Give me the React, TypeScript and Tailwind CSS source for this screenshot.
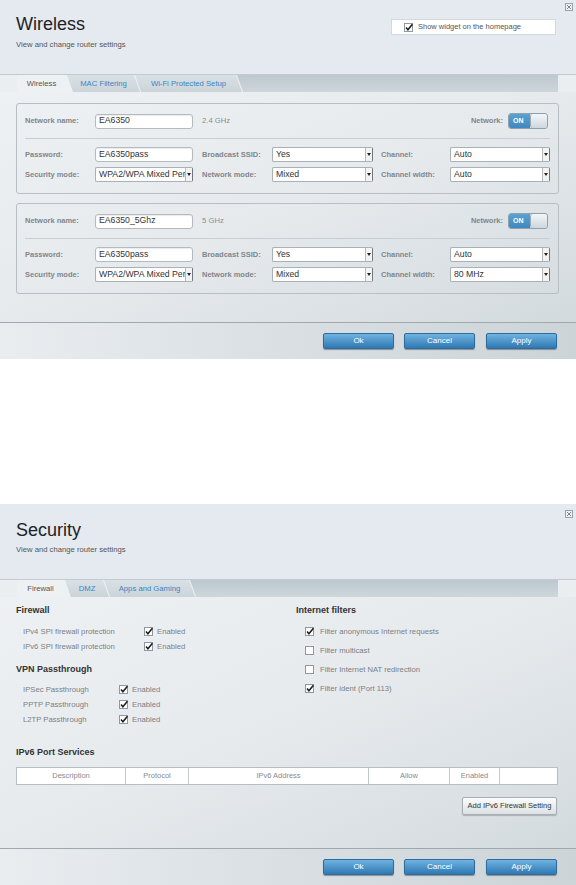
import type { ReactNode } from 'react'

type Tab = { label: string; cls: string; active?: boolean }

const CloseIcon = ({ cls }: { cls: string }) => (
  <svg width="8" height="8" viewBox="0 0 8 8" className={`absolute right-[3px] ${cls}`}>
    <rect x="0.5" y="0.5" width="7" height="7" fill="#eef1f4" stroke="#9aa2a8" />
    <path d="M2 2L6 6M6 2L2 6" stroke="#7d868c" strokeWidth="1" />
  </svg>
)

const Check = ({ checked }: { checked?: boolean }) => (
  <svg width="10" height="9" viewBox="0 0 10 9" className="shrink-0">
    <rect x="0.5" y="0.5" width="8" height="8" fill="#fff" stroke="#8f989e" />
    {checked && (
      <path d="M2 4.6L3.9 6.8L8.4 1.2" fill="none" stroke="#1d1d1d" strokeWidth="1.5" />
    )}
  </svg>
)

const TextInput = ({ value }: { value: string }) => (
  <div className="flex h-[15px] w-[98px] shrink-0 items-center rounded-[3px] border border-[#b3bbc0] bg-white pl-[3px] text-[8.7px] text-[#333] shadow-[inset_0_1px_1px_rgba(0,0,0,0.08)]">
    {value}
  </div>
)

const Select = ({ value, cls }: { value: string; cls: string }) => (
  <div
    className={`${cls} flex h-[15px] shrink-0 items-stretch overflow-hidden rounded-[2px] border border-[#a9b1b6] border-r-[#6f777c] bg-white`}
  >
    <div className="flex-1 overflow-hidden whitespace-nowrap pl-[3px] text-[8.7px] leading-[13px] text-[#333]">
      {value}
    </div>
    <div className="flex w-[7px] shrink-0 items-center justify-center border-l border-[#b9b9b9] bg-[#f3f3f3]">
      <svg width="4" height="3" viewBox="0 0 4 3">
        <polygon points="0,0 4,0 2,3" fill="#222" />
      </svg>
    </div>
  </div>
)

const Label = ({ children, cls }: { children: ReactNode; cls: string }) => (
  <div className={`${cls} shrink-0 text-[7.5px] font-bold text-[#80868b]`}>{children}</div>
)

const Toggle = () => (
  <div className="ml-[5px] mr-[2px] flex h-[16px] w-[40px] overflow-hidden rounded-[3px] border border-[#8ea2ae]">
    <div className="flex w-[21px] items-center bg-linear-to-b from-[#5ba2d3] to-[#3f88bf] pl-[4px] text-[7px] font-bold text-white">
      ON
    </div>
    <div className="flex-1 rounded-[3px] border-l border-[#9aabb5] bg-linear-to-b from-[#f4f7f9] to-[#cdd7dd]" />
  </div>
)

const BlueButton = ({ label }: { label: string }) => (
  <div className="flex h-[16px] w-[71px] items-center justify-center rounded-[2px] border border-[#2d6d9d] bg-linear-to-b from-[#6fb3e0] to-[#2e78b3] text-[8px] text-white shadow-[0_1px_1px_rgba(0,0,0,0.35)]">
    {label}
  </div>
)

const Tabs = ({ tabs }: { tabs: Tab[] }) => (
  <div className="ml-[17px] mr-[18px] flex h-[17px] bg-[#eef2f4]">
    {tabs.map((t, i) => (
      <div
        key={t.label}
        className={`${t.cls} flex shrink-0 items-center justify-center text-[7.7px] ${
          i === 0
            ? 'pr-[6px] [clip-path:polygon(0_0,calc(100%_-_6px)_0,100%_100%,0_100%)]'
            : '-ml-[5px] [clip-path:polygon(0_0,calc(100%_-_6px)_0,100%_100%,6px_100%)]'
        } ${
          t.active
            ? 'bg-[#eef1f3] text-[#555]'
            : 'bg-linear-to-b from-[#d9e1e5] to-[#cbd4d9] text-[#3a86c2]'
        }`}
      >
        {t.label}
      </div>
    ))}
    <div className="-ml-[5px] flex-1 bg-linear-to-b from-[#bdc9cf] to-[#cdd6db] [clip-path:polygon(0_0,100%_0,100%_100%,6px_100%)]" />
  </div>
)

const Footer = () => (
  <div className="flex h-[37px] justify-end border-t border-[#9ea8ad] bg-linear-to-r from-[#e9edf0] via-[#d9dfe3] to-[#cdd4d8] pr-[19px] pt-[10px]">
    <BlueButton label="Ok" />
    <div className="ml-[10px]">
      <BlueButton label="Cancel" />
    </div>
    <div className="ml-[11px]">
      <BlueButton label="Apply" />
    </div>
  </div>
)

const WirelessSection = ({ name, band, width }: { name: string; band: string; width: string }) => (
  <div className="ml-[16px] w-[543px] rounded-[3px] border border-[#b7bfc4] px-[8px] pb-[11px] pt-[8px]">
    <div className="flex h-[18px] items-center">
      <Label cls="w-[70px]">Network name:</Label>
      <TextInput value={name} />
      <div className="ml-[9px] text-[7.7px] text-[#8a8f94]">{band}</div>
      <div className="ml-auto text-[7.5px] font-bold text-[#80868b]">Network:</div>
      <Toggle />
    </div>
    <div className="mt-[8px] border-t border-[#c8cfd3]" />
    <div className="mt-[8px] flex h-[15px] items-center">
      <Label cls="w-[70px]">Password:</Label>
      <TextInput value="EA6350pass" />
      <Label cls="ml-[9px] w-[70px]">Broadcast SSID:</Label>
      <Select value="Yes" cls="w-[101px]" />
      <Label cls="ml-[8px] w-[69px]">Channel:</Label>
      <Select value="Auto" cls="w-[100px]" />
    </div>
    <div className="mt-[5px] flex h-[15px] items-center">
      <Label cls="w-[70px]">Security mode:</Label>
      <Select value="WPA2/WPA Mixed Personal" cls="w-[98px]" />
      <Label cls="ml-[9px] w-[70px]">Network mode:</Label>
      <Select value="Mixed" cls="w-[101px]" />
      <Label cls="ml-[8px] w-[69px]">Channel width:</Label>
      <Select value={width} cls="w-[100px]" />
    </div>
  </div>
)

const Heading = ({ children }: { children: ReactNode }) => (
  <div className="text-[9px] font-bold leading-[12px] text-[#333]">{children}</div>
)

const EnabledRow = ({ label, cls }: { label: string; cls: string }) => (
  <div className="flex h-[15px] items-center pl-[7px] text-[7.7px] text-[#7b8085]">
    <div className={`${cls} shrink-0`}>{label}</div>
    <Check checked />
    <div className="ml-[3px]">Enabled</div>
  </div>
)

const FilterRow = ({ label, checked }: { label: string; checked?: boolean }) => (
  <div className="flex h-[19px] items-center pl-[9px] text-[7.7px] text-[#7b8085]">
    <Check checked={checked} />
    <div className="ml-[5px]">{label}</div>
  </div>
)

const Cell = ({ children, cls }: { children?: ReactNode; cls: string }) => (
  <div className={`${cls} flex items-center justify-center text-[7.5px] text-[#868b90]`}>{children}</div>
)

export default function App() {
  return (
    <div className="w-[576px] bg-white font-['Liberation_Sans',Arial,sans-serif]">
      {/* Wireless panel */}
      <div className="relative">
        <CloseIcon cls="top-[3px]" />
        <div className="flex h-[75px] justify-between border-b border-[#c3cbd0] bg-[#e4eaf0] px-[16px]">
          <div className="pt-[13px]">
            <div className="text-[18px] leading-[22px] text-[#1e2226]">Wireless</div>
            <div className="mt-[5px] text-[7.7px] leading-[10px] text-[#555]">View and change router settings</div>
          </div>
          <div className="mr-[4px] mt-[19px] flex h-[16px] w-[165px] items-center border border-[#d3d9de] bg-white pl-[12px] text-[7.5px] text-[#555]">
            <Check checked />
            <span className="ml-[4px]">Show widget on the homepage</span>
          </div>
        </div>
        <div className="bg-[#eaeef1]">
          <Tabs
            tabs={[
              { label: 'Wireless', cls: 'w-[55px]', active: true },
              { label: 'MAC Filtering', cls: 'w-[73px]' },
              { label: 'Wi-Fi Protected Setup', cls: 'w-[107px]' },
            ]}
          />
        </div>
        <div className="h-[230px] bg-linear-to-br from-[#eef1f3] via-[#e6eaed] to-[#d3dade] pt-[11px]">
          <WirelessSection name="EA6350" band="2.4 GHz" width="Auto" />
          <div className="mt-[9px]">
            <WirelessSection name="EA6350_5Ghz" band="5 GHz" width="80 MHz" />
          </div>
        </div>
        <Footer />
      </div>

      {/* Security panel */}
      <div className="relative mt-[145px]">
        <CloseIcon cls="top-[6px]" />
        <div className="h-[76px] border-b border-[#c3cbd0] bg-[#e4eaf0] px-[16px] pt-[15px]">
          <div className="text-[18px] leading-[22px] text-[#1e2226]">Security</div>
          <div className="mt-[4px] text-[7.7px] leading-[10px] text-[#555]">View and change router settings</div>
        </div>
        <div className="bg-[#eaeef1]">
          <Tabs
            tabs={[
              { label: 'Firewall', cls: 'w-[53px]', active: true },
              { label: 'DMZ', cls: 'w-[44px]' },
              { label: 'Apps and Gaming', cls: 'w-[91px]' },
            ]}
          />
        </div>
        <div className="flex h-[251px] flex-col bg-linear-to-br from-[#eef1f3] via-[#e6eaed] to-[#d3dade] pt-[7px]">
          <div className="flex">
            <div className="w-[296px] shrink-0 pl-[16px]">
              <Heading>Firewall</Heading>
              <div className="mt-[8px]">
                <EnabledRow label="IPv4 SPI firewall protection" cls="w-[121px]" />
                <EnabledRow label="IPv6 SPI firewall protection" cls="w-[121px]" />
              </div>
              <div className="mt-[9px]">
                <Heading>VPN Passthrough</Heading>
              </div>
              <div className="mt-[7px]">
                <EnabledRow label="IPSec Passthrough" cls="w-[96px]" />
                <EnabledRow label="PPTP Passthrough" cls="w-[96px]" />
                <EnabledRow label="L2TP Passthrough" cls="w-[96px]" />
              </div>
            </div>
            <div>
              <Heading>Internet filters</Heading>
              <div className="mt-[6px]">
                <FilterRow label="Filter anonymous Internet requests" checked />
                <FilterRow label="Filter multicast" />
                <FilterRow label="Filter Internet NAT redirection" />
                <FilterRow label="Filter ident (Port 113)" checked />
              </div>
            </div>
          </div>
          <div className="mt-[19px] pl-[16px]">
            <Heading>IPv6 Port Services</Heading>
          </div>
          <div className="ml-[16px] mt-[9px] flex h-[18px] w-[542px] border border-[#b6bec3] bg-white">
            <Cell cls="w-[109px] border-r border-[#c3c9cd]">Description</Cell>
            <Cell cls="w-[63px] border-r border-[#c3c9cd]">Protocol</Cell>
            <Cell cls="w-[180px] border-r border-[#c3c9cd]">IPv6 Address</Cell>
            <Cell cls="w-[81px] border-r border-[#c3c9cd]">Allow</Cell>
            <Cell cls="w-[50px] border-r border-[#c3c9cd]">Enabled</Cell>
            <Cell cls="flex-1" />
          </div>
          <div className="mr-[19px] mt-[12px] flex h-[18px] w-[95px] items-center justify-center self-end rounded-[2px] border border-[#a6afb5] bg-linear-to-b from-[#fbfcfc] to-[#dce1e4] text-[7.5px] text-[#333] shadow-[0_1px_1px_rgba(0,0,0,0.2)]">
            Add IPv6 Firewall Setting
          </div>
        </div>
        <Footer />
      </div>
    </div>
  )
}
